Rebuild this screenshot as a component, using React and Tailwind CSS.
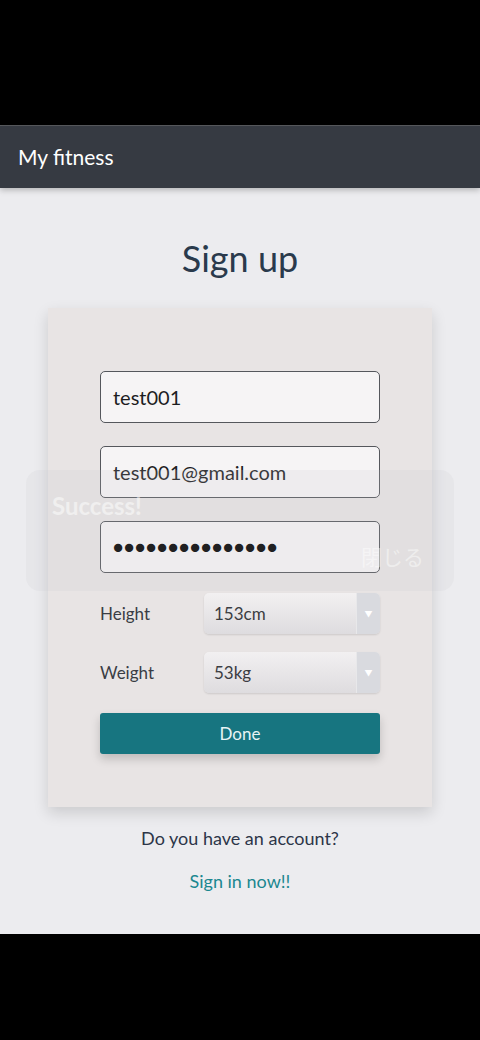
import React from 'react';

const font = { fontFamily: 'Lato, "Noto Sans", "Noto Sans CJK JP", sans-serif' };

const TextInput = ({ value, password }) => (
  <div className="h-[52px] w-[280px] rounded-[5px] border border-[#55575c] bg-[#f6f4f5] px-3 flex items-center">
    {password ? (
      <span className="text-[17px] tracking-[0.8px] text-black">{'●'.repeat(15)}</span>
    ) : (
      <span className="text-[20px] text-[#1d1d1f]">{value}</span>
    )}
  </div>
);

const SelectRow = ({ label, value }) => (
  <div className="flex items-center w-[280px]">
    <span className="w-[104px] text-[17px] text-[#3a3d44]">{label}</span>
    <div className="flex h-[41px] flex-1 rounded-[5px] overflow-hidden bg-gradient-to-b from-[#f2f0f1] to-[#dedcdf] shadow-[0_1px_2px_rgba(0,0,0,0.12)]">
      <div className="flex flex-1 items-center pl-[10px] text-[17px] text-[#3b3d42]">{value}</div>
      <div className="flex w-[24px] items-center justify-center bg-[#d9dadf] border-l border-[#e8e8ea]">
        <span className="text-[8px] text-white">▼</span>
      </div>
    </div>
  </div>
);

const App = () => {
  return (
    <div className="w-[480px] h-[1040px] bg-black flex flex-col" style={font}>
      <div className="h-[125px] bg-black" />
      <div className="h-[1px] bg-[#5a5c60]" />
      <header className="h-[62px] bg-[#363a42] flex items-center px-[18px] shadow-[0_2px_6px_rgba(0,0,0,0.25)] relative z-10">
        <span className="text-[21px] text-white">My fitness</span>
      </header>
      <main className="relative h-[746px] bg-[#ececef] flex flex-col items-center">
        <h1 className="mt-[48px] text-[36px] leading-[44px] text-[#2a3a4c]">Sign up</h1>
        <div className="mt-[28px] w-[384px] h-[499px] bg-[#e8e4e4] shadow-[0_6px_14px_rgba(0,0,0,0.14)] flex flex-col items-center pt-[63px]">
          <div className="flex flex-col gap-[23px]">
            <TextInput value="test001" />
            <TextInput value="test001@gmail.com" />
            <TextInput password />
          </div>
          <div className="mt-[20px] flex flex-col gap-[18px]">
            <SelectRow label="Height" value="153cm" />
            <SelectRow label="Weight" value="53kg" />
          </div>
          <button className="mt-[20px] h-[41px] w-[280px] rounded-[3px] bg-[#177580] text-[17px] text-[#e8f4f5] shadow-[0_5px_10px_rgba(0,0,0,0.18)]">
            Done
          </button>
        </div>
        <p className="mt-[18px] text-[18px] text-[#2c3548]">Do you have an account?</p>
        <p className="mt-[16px] text-[18px] text-[#1b8790]">Sign in now!!</p>

        <div className="absolute left-[26px] top-[282px] w-[428px] h-[121px] rounded-[14px] bg-[rgba(200,200,205,0.16)]">
          <span className="absolute left-[26px] top-[18px] text-[24px] font-bold text-white/50">Success!</span>
          <span className="absolute right-[30px] top-[71px] text-[21px] text-white/45">閉じる</span>
        </div>
      </main>
      <div className="flex-1 bg-black" />
    </div>
  );
};

export default App;
